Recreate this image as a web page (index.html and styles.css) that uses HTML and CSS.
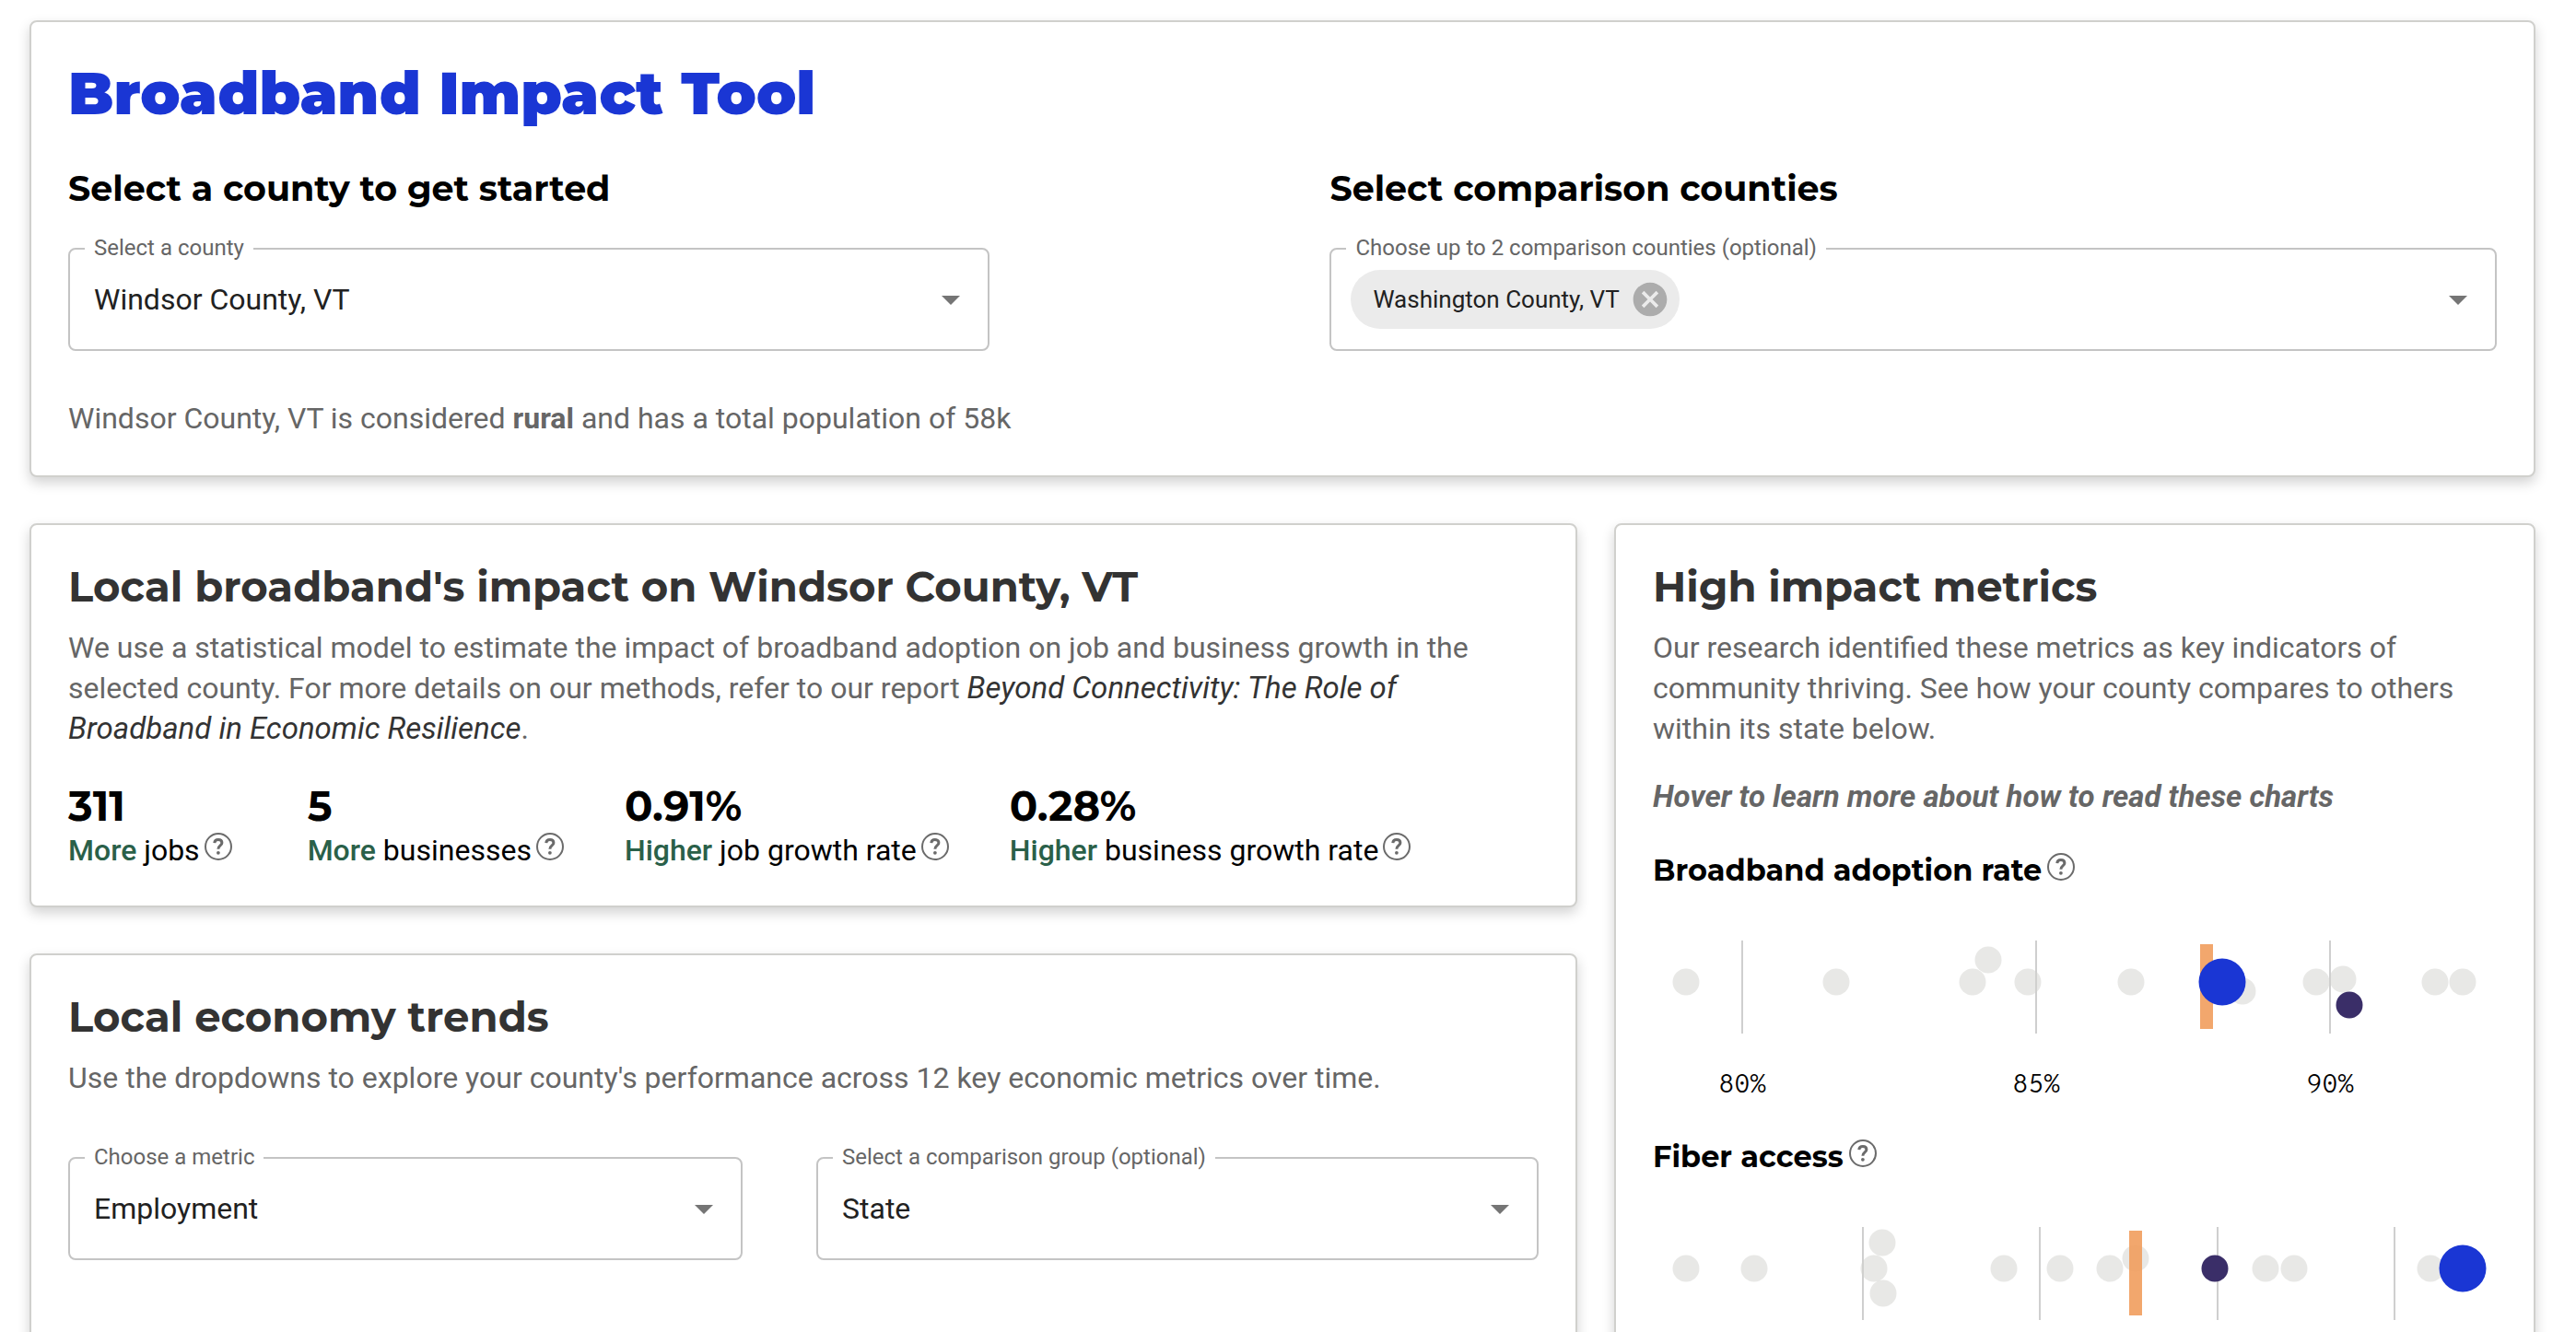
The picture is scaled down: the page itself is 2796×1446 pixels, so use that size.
FILE: index.html
```html
<!DOCTYPE html>
<html lang="en">
<head>
<meta charset="utf-8">
<title>Broadband Impact Tool</title>
<meta name="viewport" content="width=device-width, initial-scale=1">
<link rel="stylesheet" href="styles.css">
</head>
<body>
<svg width="0" height="0" class="sprite" aria-hidden="true">
  <symbol id="help" viewBox="0 0 30 30">
    <circle cx="15" cy="15" r="14" fill="none" stroke="#6b6b6b" stroke-width="2"/>
    <path d="M10.800 11.200C11 8.600 12.800 7.600 14.900 7.600c2.300 0 4 1.300 4 3.300 0 3.100-4 3-4 6.800" fill="none" stroke="#6b6b6b" stroke-width="3"/>
    <circle cx="14.900" cy="21.800" r="1.900" fill="#6b6b6b"/>
  </symbol>
  <symbol id="arrow" viewBox="0 0 24 24"><path d="M7 10l5 5 5-5z" fill="#757575"/></symbol>
  <symbol id="cancel" viewBox="0 0 24 24">
    <path d="M12 2C6.470 2 2 6.470 2 12s4.470 10 10 10 10-4.470 10-10S17.530 2 12 2zm5 13.590L15.590 17 12 13.410 8.410 17 7 15.590 10.590 12 7 8.410 8.410 7 12 10.590 15.590 7 17 8.410 13.410 12 17 15.590z" fill="#acacac"/>
  </symbol>
</svg>

<div class="page">
  <header class="card">
    <h1 class="title">Broadband Impact Tool</h1>
    <div class="pickers">
      <section>
        <h2 class="picker-heading">Select a county to get started</h2>
        <div class="field">
          <label class="field-label" for="county">Select a county</label>
          <select class="field-control" id="county"><option>Windsor County, VT</option></select>
          <svg class="field-arrow" aria-hidden="true"><use href="#arrow"/></svg>
        </div>
      </section>
      <section>
        <h2 class="picker-heading">Select comparison counties</h2>
        <div class="field field-multi">
          <label class="field-label" for="compare">Choose up to 2 comparison counties (optional)</label>
          <span class="chip">Washington County, VT
            <button class="chip-remove" type="button"><svg class="chip-icon" aria-hidden="true"><use href="#cancel"/></svg></button>
          </span>
          <input class="field-input" id="compare" type="text">
          <button class="field-open" type="button"><svg class="open-icon" aria-hidden="true"><use href="#arrow"/></svg></button>
        </div>
      </section>
    </div>
    <p class="text summary">Windsor County, VT is considered <strong>rural</strong> and has a total population of 58k</p>
  </header>

  <main class="columns">
    <div class="main-column">
      <section class="card">
        <h2 class="heading">Local broadband's impact on Windsor County, VT</h2>
        <p class="text">We use a statistical model to estimate the impact of broadband adoption on job and business growth in the selected county. For more details on our methods, refer to our report <a class="report" href="#report">Beyond Connectivity: The Role of Broadband in Economic Resilience</a>.</p>
        <ul class="stats">
          <li class="stat"><span class="stat-value">311</span><span class="stat-label"><span><b class="up">More</b> jobs</span><button class="help" type="button"><svg class="help-icon" aria-hidden="true"><use href="#help"/></svg></button></span></li>
          <li class="stat"><span class="stat-value">5</span><span class="stat-label"><span><b class="up">More</b> businesses</span><button class="help" type="button"><svg class="help-icon" aria-hidden="true"><use href="#help"/></svg></button></span></li>
          <li class="stat"><span class="stat-value">0.91%</span><span class="stat-label"><span><b class="up">Higher</b> job growth rate</span><button class="help" type="button"><svg class="help-icon" aria-hidden="true"><use href="#help"/></svg></button></span></li>
          <li class="stat"><span class="stat-value">0.28%</span><span class="stat-label"><span><b class="up">Higher</b> business growth rate</span><button class="help" type="button"><svg class="help-icon" aria-hidden="true"><use href="#help"/></svg></button></span></li>
        </ul>
      </section>

      <section class="card trends">
        <h2 class="heading">Local economy trends</h2>
        <p class="text">Use the dropdowns to explore your county's performance across 12 key economic metrics over time.</p>
        <div class="filters">
          <div class="field">
            <label class="field-label" for="metric">Choose a metric</label>
            <select class="field-control" id="metric"><option>Employment</option></select>
            <svg class="field-arrow" aria-hidden="true"><use href="#arrow"/></svg>
          </div>
          <div class="field">
            <label class="field-label" for="group">Select a comparison group (optional)</label>
            <select class="field-control" id="group"><option>State</option></select>
            <svg class="field-arrow" aria-hidden="true"><use href="#arrow"/></svg>
          </div>
        </div>
      </section>
    </div>

    <aside class="card">
      <h2 class="heading">High impact metrics</h2>
      <p class="text">Our research identified these metrics as key indicators of community thriving. See how your county compares to others within its state below.</p>
      <p class="text hint">Hover to learn more about how to read these charts</p>

      <section class="metric">
        <h3 class="metric-heading">Broadband adoption rate<button class="help" type="button"><svg class="help-icon" aria-hidden="true"><use href="#help"/></svg></button></h3>
        <svg class="chart" viewBox="0 0 916 194">
          <g class="grid-line"><path d="M97 17v101M416 17v101M735 17v101"/></g>
          <g class="county">
            <circle cx="36" cy="62" r="14.500"/><circle cx="199" cy="62" r="14.500"/><circle cx="347" cy="62" r="14.500"/><circle cx="364" cy="38" r="14.500"/><circle cx="407" cy="62" r="14.500"/><circle cx="519" cy="62" r="14.500"/><circle cx="640" cy="72" r="14.500"/><circle cx="720" cy="62" r="14.500"/><circle cx="749" cy="59" r="14.500"/><circle cx="849" cy="62" r="14.500"/><circle cx="879" cy="62" r="14.500"/>
          </g>
          <rect class="average" x="594" y="21" width="14" height="92"/>
          <circle class="compared" cx="756" cy="87" r="14.500"/>
          <circle class="selected" cx="618" cy="62" r="25.500"/>
          <g class="tick"><text x="97" y="182">80%</text><text x="416" y="182">85%</text><text x="735" y="182">90%</text></g>
        </svg>
      </section>

      <section class="metric">
        <h3 class="metric-heading">Fiber access<button class="help" type="button"><svg class="help-icon" aria-hidden="true"><use href="#help"/></svg></button></h3>
        <svg class="chart" viewBox="0 0 916 194">
          <g class="grid-line"><path d="M228 17v101M420 17v101M613 17v101M805 17v101"/></g>
          <g class="county">
            <circle cx="36" cy="62" r="14.500"/><circle cx="110" cy="62" r="14.500"/><circle cx="240" cy="62" r="14.500"/><circle cx="249" cy="34" r="14.500"/><circle cx="250" cy="89" r="14.500"/><circle cx="381" cy="62" r="14.500"/><circle cx="442" cy="62" r="14.500"/><circle cx="496" cy="62" r="14.500"/><circle cx="524" cy="51" r="14.500"/><circle cx="665" cy="62" r="14.500"/><circle cx="696" cy="62" r="14.500"/><circle cx="844" cy="62" r="14.500"/>
          </g>
          <rect class="average" x="517" y="21" width="14" height="92"/>
          <circle class="compared" cx="610" cy="62" r="14.500"/>
          <circle class="selected" cx="879" cy="62" r="25.500"/>
        </svg>
      </section>
    </aside>
  </main>
</div>
</body>
</html>
```
FILE: styles.css
```css
* { box-sizing: border-box; }

body {
  margin: 0;
  height: 100vh;
  overflow: hidden;
  background: #fff;
  color: #000;
  font-family: Roboto, "Liberation Sans", sans-serif;
  font-size: 32px;
}

h1, h2, h3, p, ul { margin: 0; padding: 0; font-weight: inherit; }
button { padding: 0; border: 0; background: none; cursor: pointer; }
svg { display: block; }
.sprite { position: absolute; }

.page { padding: 22px 44px 0 32px; }

.card {
  padding: 40px;
  border: 2px solid #d0d0cd;
  border-radius: 8px;
  background: #fff;
  box-shadow: 0 6px 14px rgba(0, 0, 0, 0.18);
}

.title, .picker-heading, .heading, .metric-heading, .stat-value {
  font-family: Montserrat, Inter, sans-serif;
  font-weight: 700;
}

.title { color: #1a36d4; font-size: 64px; font-weight: 900; line-height: 74px; }
.picker-heading { font-size: 38px; line-height: 48px; }
.heading { color: #333; font-size: 45px; line-height: 54px; }

.pickers {
  display: grid;
  grid-template-columns: 1000fr 1266fr;
  column-gap: 14%;
  margin-top: 43px;
}

.field {
  display: grid;
  position: relative;
  height: 112px;
  border: 2px solid #c4c4c4;
  border-radius: 8px;
}
.pickers .field { margin-top: 40px; }

.field-label {
  position: absolute;
  top: -16px;
  left: 16px;
  padding: 0 10px;
  background: #fff;
  color: #666;
  font-size: 24px;
  line-height: 28px;
}

.field-control {
  grid-area: 1 / 1;
  width: 100%;
  padding: 0 64px 0 26px;
  border: 0;
  background: transparent;
  color: #212121;
  font: inherit;
  appearance: none;
}
.field-arrow {
  grid-area: 1 / 1;
  place-self: center end;
  width: 48px;
  height: 48px;
  margin-right: 16px;
  pointer-events: none;
}

.field-multi { display: flex; align-items: center; padding: 0 16px 0 21px; }
.field-input { flex: 1; min-width: 0; border: 0; background: none; font: inherit; }
.open-icon { width: 48px; height: 48px; }

.chip {
  display: flex;
  align-items: center;
  gap: 11px;
  height: 64px;
  padding: 0 10px 0 24px;
  border-radius: 32px;
  background: #ebebeb;
  color: #212121;
  font-size: 26px;
}
.chip-icon { width: 44px; height: 44px; }

.text { margin-top: 17px; color: #666; line-height: 44px; }
.summary { margin-top: 51px; }
.report { color: #333; font-size: 33px; font-style: italic; line-height: 40px; text-decoration: none; }

.columns {
  display: grid;
  grid-template-columns: 42fr 25fr;
  gap: 40px;
  margin-top: 50px;
}
.main-column { display: flex; flex-direction: column; gap: 50px; }
.trends { flex: 1; }

.stats { display: flex; gap: 66px; margin-top: 38px; list-style: none; }
.stat:first-child { margin-right: 16px; }
.stat-value { display: block; font-size: 45px; line-height: 48px; }
.stat-label { display: flex; gap: 5px; margin-top: 4px; line-height: 40px; }
.up { color: #2a6049; font-weight: 500; }

.help { align-self: flex-start; }
.help-icon { width: 30px; height: 30px; margin-top: 1px; }

.filters {
  display: grid;
  grid-template-columns: 732fr 784fr;
  gap: 80px;
  margin-top: 64px;
}

.hint { margin-top: 30px; font-size: 33px; font-style: italic; font-weight: 700; }
.metric { margin-top: 38px; }
.metric-heading { display: flex; gap: 6px; font-size: 32px; line-height: 40px; }

.chart { width: 100%; margin-top: 39px; }
.grid-line { fill: none; stroke: #cfcfcf; stroke-width: 2px; }
.county { fill: #d2d2ce; fill-opacity: 0.5; }
.average { fill: #f19d5d; fill-opacity: 0.9; }
.compared { fill: #3a2e68; }
.selected { fill: #1a36d4; }
.tick { font-family: "Overpass Mono", "Roboto Mono", "Liberation Mono", monospace; font-size: 28px; font-weight: 300; text-anchor: middle; }
```
